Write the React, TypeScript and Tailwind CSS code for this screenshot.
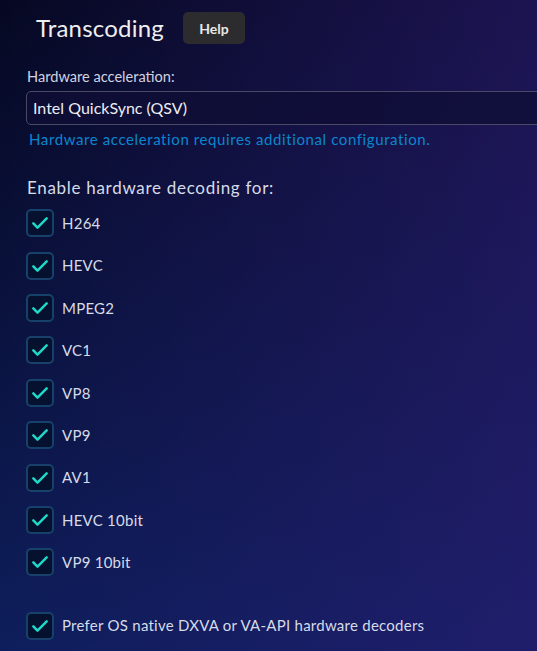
import React from "react";

const codecs = ["H264", "HEVC", "MPEG2", "VC1", "VP8", "VP9", "AV1", "HEVC 10bit", "VP9 10bit"];

const Check = ({ label }: { label: string }) => (
  <label className="flex items-center h-[42.4px]">
    <span className="w-[28px] h-[28px] rounded-[5px] border-2 border-[#16416a] bg-[#06112f] flex items-center justify-center shrink-0">
      <svg width="20" height="20" viewBox="0 0 24 24" fill="none" stroke="#1fd8c6" strokeWidth="3" strokeLinecap="round" strokeLinejoin="round">
        <path d="M4 12.5l5 5L20 6.5" />
      </svg>
    </span>
    <span className="ml-[8px] text-[15px] tracking-[0.25px] text-[#d6dbe8]">{label}</span>
  </label>
);

export default function App() {
  return (
    <div
      className="w-[537px] h-[651px] overflow-hidden bg-[linear-gradient(to_right,rgba(40,22,110,0)_0%,rgba(46,30,120,0.55)_100%),linear-gradient(to_bottom,#060822_0%,#0e1e5c_100%)] text-[#e6e6ee]"
      style={{ fontFamily: "Lato, 'Noto Sans', sans-serif" }}
    >
      <div className="flex items-center pl-[36px] pt-[12px]">
        <h2 className="text-[24px] leading-[32px] tracking-[0.2px] text-[#eeeeee]">Transcoding</h2>
        <button className="ml-[19px] h-[32px] w-[62px] rounded-[5px] bg-[#2c2c2e] text-[14px] font-bold text-[#e8e8e8]">Help</button>
      </div>

      <div className="pl-[26px] mt-[24px]">
        <div className="text-[14.6px] text-[#d0d4e0] pl-[1px] leading-[18px]">Hardware acceleration:</div>
        <div className="mt-[5px] h-[34px] w-[530px] rounded-[5px] border border-[#4b4a66] bg-[#0f0e36]/80 flex items-center pl-[6px] text-[16px] text-[#ececf2]">
          Intel QuickSync (QSV)
        </div>
        <div className="mt-[4px] pl-[3px] text-[15px] tracking-[0.6px] text-[#0a86cf] leading-[20px]">
          Hardware acceleration requires additional configuration.
        </div>

        <div className="mt-[28px] pl-[1px] text-[17px] tracking-[0.7px] text-[#d6dbe8] leading-[22px]">Enable hardware decoding for:</div>
        <div className="mt-[3px] flex flex-col">
          {codecs.map((c) => (
            <Check key={c} label={c} />
          ))}
        </div>
        <div className="mt-[21px]">
          <Check label="Prefer OS native DXVA or VA-API hardware decoders" />
        </div>
      </div>
    </div>
  );
}
